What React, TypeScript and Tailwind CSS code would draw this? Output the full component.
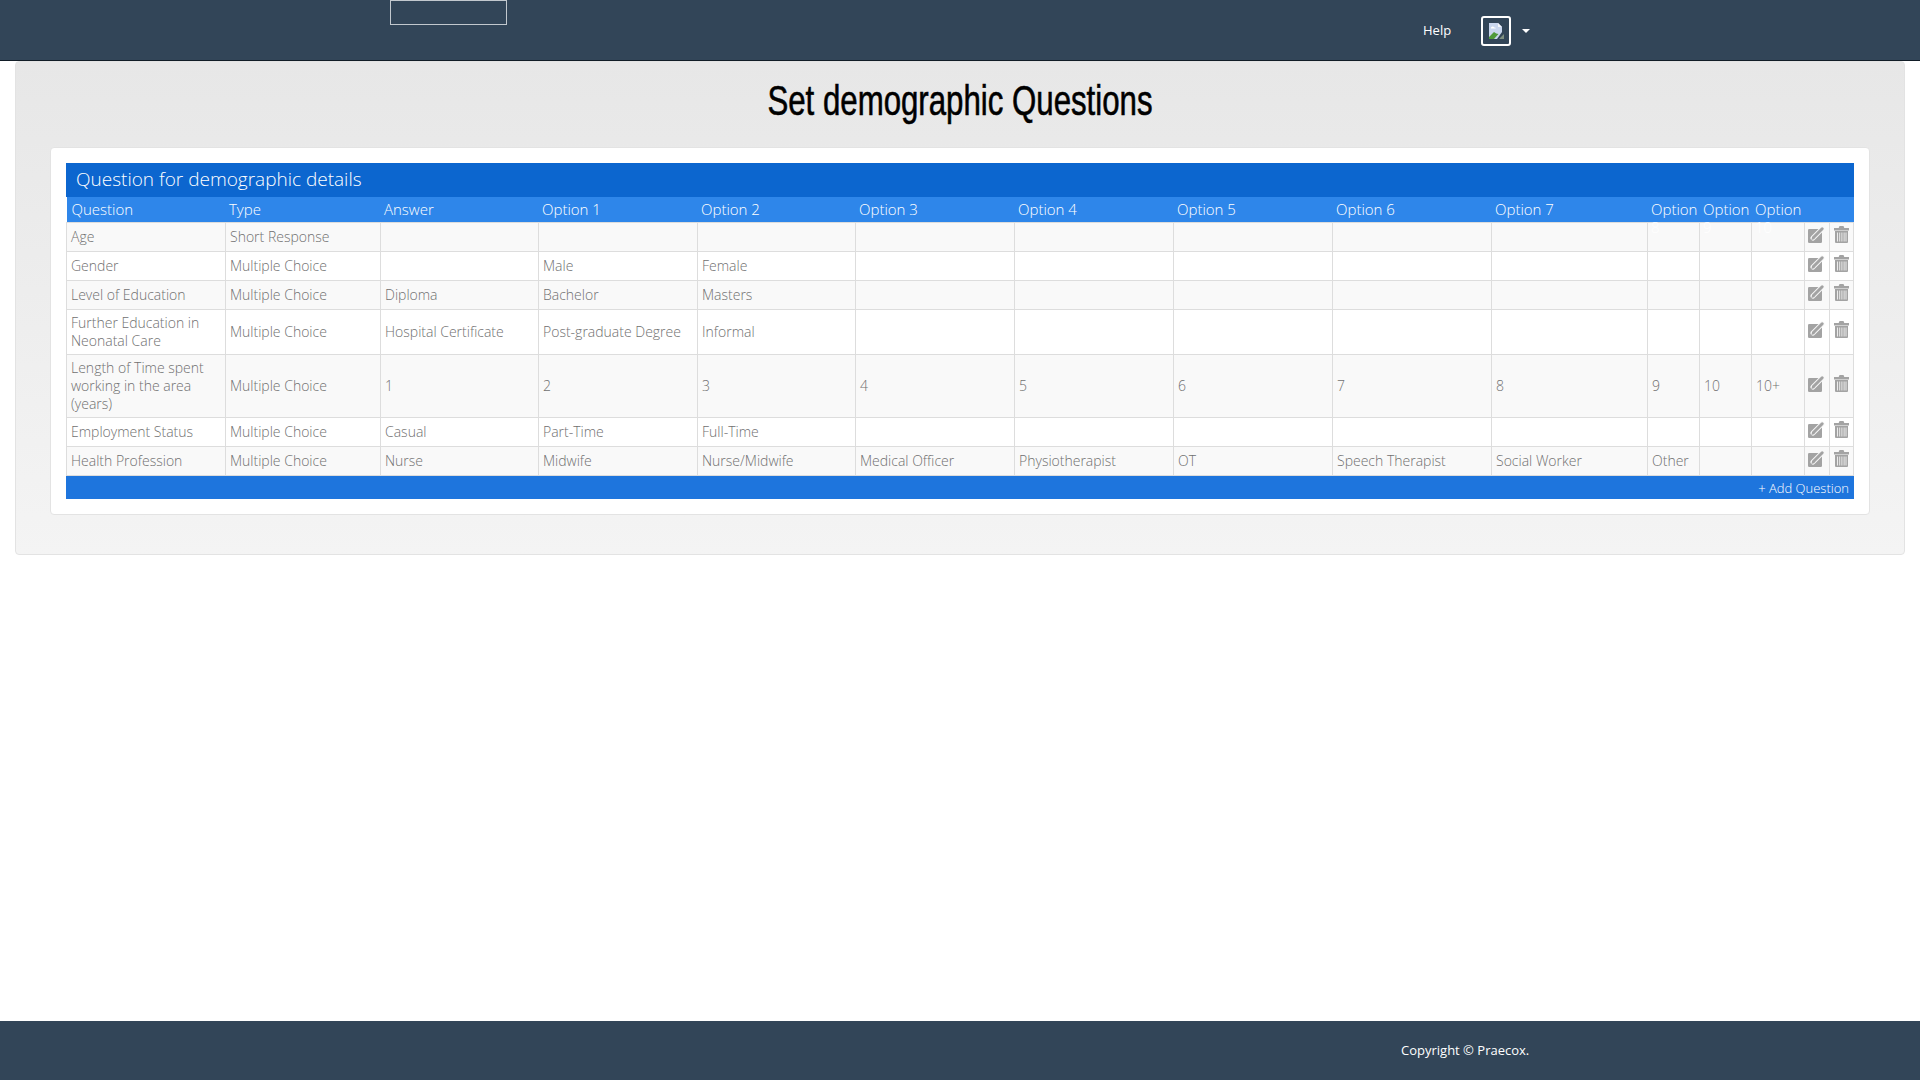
import React from "react";

const widths = [159, 155, 158, 159, 158, 159, 159, 159, 159, 156, 52, 52, 53, 25, 24];
const heads = ["Question", "Type", "Answer", "Option 1", "Option 2", "Option 3", "Option 4", "Option 5", "Option 6", "Option 7", "Option 8", "Option 9", "Option 10", "", ""];
const rows: string[][] = [
  ["Age", "Short Response", "", "", "", "", "", "", "", "", "", "", ""],
  ["Gender", "Multiple Choice", "", "Male", "Female", "", "", "", "", "", "", "", ""],
  ["Level of Education", "Multiple Choice", "Diploma", "Bachelor", "Masters", "", "", "", "", "", "", "", ""],
  ["Further Education in Neonatal Care", "Multiple Choice", "Hospital Certificate", "Post-graduate Degree", "Informal", "", "", "", "", "", "", "", ""],
  ["Length of Time spent working in the area (years)", "Multiple Choice", "1", "2", "3", "4", "5", "6", "7", "8", "9", "10", "10+"],
  ["Employment Status", "Multiple Choice", "Casual", "Part-Time", "Full-Time", "", "", "", "", "", "", "", ""],
  ["Health Profession", "Multiple Choice", "Nurse", "Midwife", "Nurse/Midwife", "Medical Officer", "Physiotherapist", "OT", "Speech Therapist", "Social Worker", "Other", "", ""],
];

function EditIcon() {
  return (
    <svg width="17" height="17" viewBox="0 0 17 17" className="block">
      <rect x="0" y="3" width="14" height="14" rx="1.200" fill="#a3a3a3" />
      <path d="M5 12 14 3" stroke="#f7f7f7" strokeWidth="5" strokeLinecap="round" />
      <path d="M5.500 11.500 14.200 2.800" stroke="#a3a3a3" strokeWidth="3" strokeLinecap="round" />
      <path d="M3.400 14 4.200 10.500 6.800 13z" fill="#a3a3a3" />
    </svg>
  );
}

function TrashIcon() {
  return (
    <svg width="15" height="17" viewBox="0 0 15 17" className="block">
      <path d="M0 2h4.700L5.500 0h4l.8 2H15v2.500H0z" fill="#a3a3a3" />
      <path d="M1 5h13v11a1 1 0 0 1-1 1H2a1 1 0 0 1-1-1z" fill="#a3a3a3" />
      <path d="M3.500 6.500v9M5.700 6.500v9M7.900 6.500v9M10.100 6.500v9M12 6.500v9" stroke="#f4f4f4" strokeWidth="0.900" />
    </svg>
  );
}

function BrokenImage() {
  return (
    <svg width="16" height="16" viewBox="0 0 16 16" className="block">
      <path d="M1 0h9l4 4v5L9 16H1z" fill="#c9d6ee" />
      <path d="M10 0l4 4h-4z" fill="#f4f6fb" />
      <path d="M3 4.500c1-1.200 2.500-1.200 3.200 0 .8-.3 1.600.2 1.600 1H3z" fill="#fff" />
      <path d="M1 14l5-5c1.500 1 3 2 4.500 2L6 16H1z" fill="#4f9a3a" />
      <path d="M11 16l5-5v5z" fill="#7e8f80" />
    </svg>
  );
}

export default function App() {
  return (
    <div className="min-h-[1080px] flex flex-col bg-white font-['Open_Sans','Liberation_Sans',sans-serif]">
      <nav className="h-[61px] shrink-0 bg-[#324558] border-b border-[#111c26] flex items-start text-white">
        <div className="ml-[390px] w-[117px] h-[25px] border border-[#c2c8ce]" />
        <a className="ml-[916px] mt-[21px] text-[13px] leading-[18px]">Help</a>
        <div className="ml-[30px] mt-[16px] w-[30px] h-[30px] border-2 border-white rounded-[3px] flex items-center justify-center">
          <BrokenImage />
        </div>
        <span className="ml-[11px] mt-[29px] w-0 h-0 border-x-[4px] border-x-transparent border-t-[4px] border-t-white" />
      </nav>

      <main className="grow">
        <section className="mx-[15px] h-[494px] border border-[#e3e3e3] rounded-[4px] bg-gradient-to-b from-[#e7e7e7] to-[#f4f4f4] px-[34px]">
          <h1 className="h-[85px] pt-[14px] text-center text-black text-[42px] leading-[50px] font-normal scale-x-[0.743] font-['Liberation_Sans',sans-serif] [-webkit-text-stroke:0.6px_black]">
            Set demographic Questions
          </h1>
          <div className="bg-white border border-[#e3e3e3] rounded-[4px] h-[368px] px-[15px] pt-[15px]">
            <div className="h-[34px] bg-[#0c66cf] text-white font-light text-[19px] leading-[33px] pl-[10px]">
              Question for demographic details
            </div>
            <table className="table-fixed border-collapse w-[1787px]">
              <colgroup>
                {widths.map((w, i) => (
                  <col key={i} style={{ width: w }} />
                ))}
              </colgroup>
              <thead>
                <tr className="bg-[#2e86ea]">
                  {heads.map((h, i) => (
                    <th key={i} className={`p-0 align-top text-left font-light text-[15px] leading-[18px] text-white ${i === 0 ? "pl-[5px]" : "pl-[3.5px]"}`}>
                      <div className="h-[25px] pt-[3px]">{h}</div>
                    </th>
                  ))}
                </tr>
              </thead>
              <tbody>
                {rows.map((r, i) => (
                  <tr key={i} className={i % 2 === 0 ? "bg-[#f9f9f9]" : "bg-white"}>
                    {r.map((c, j) => (
                      <td key={j} className="border border-[#dddddd] px-[4px] py-[4px] text-[14px] leading-[18px] font-light text-[#707070] align-middle">
                        {c}
                      </td>
                    ))}
                    <td className="border border-[#dddddd] pl-[3px] h-[29px] align-middle pb-[5px]"><EditIcon /></td>
                    <td className="border border-[#dddddd] pl-[4px] h-[29px] align-middle pb-[5px]"><TrashIcon /></td>
                  </tr>
                ))}
              </tbody>
            </table>
            <div className="h-[23px] bg-[#1e75dd] text-white font-light text-[13px] leading-[24px] text-right pr-[5px]">
              + Add Question
            </div>
          </div>
        </section>
      </main>

      <footer className="h-[59px] shrink-0 bg-[#324558] text-white text-[13px] leading-[58px] font-medium pl-[1401px]">
        Copyright © Praecox.
      </footer>
    </div>
  );
}
